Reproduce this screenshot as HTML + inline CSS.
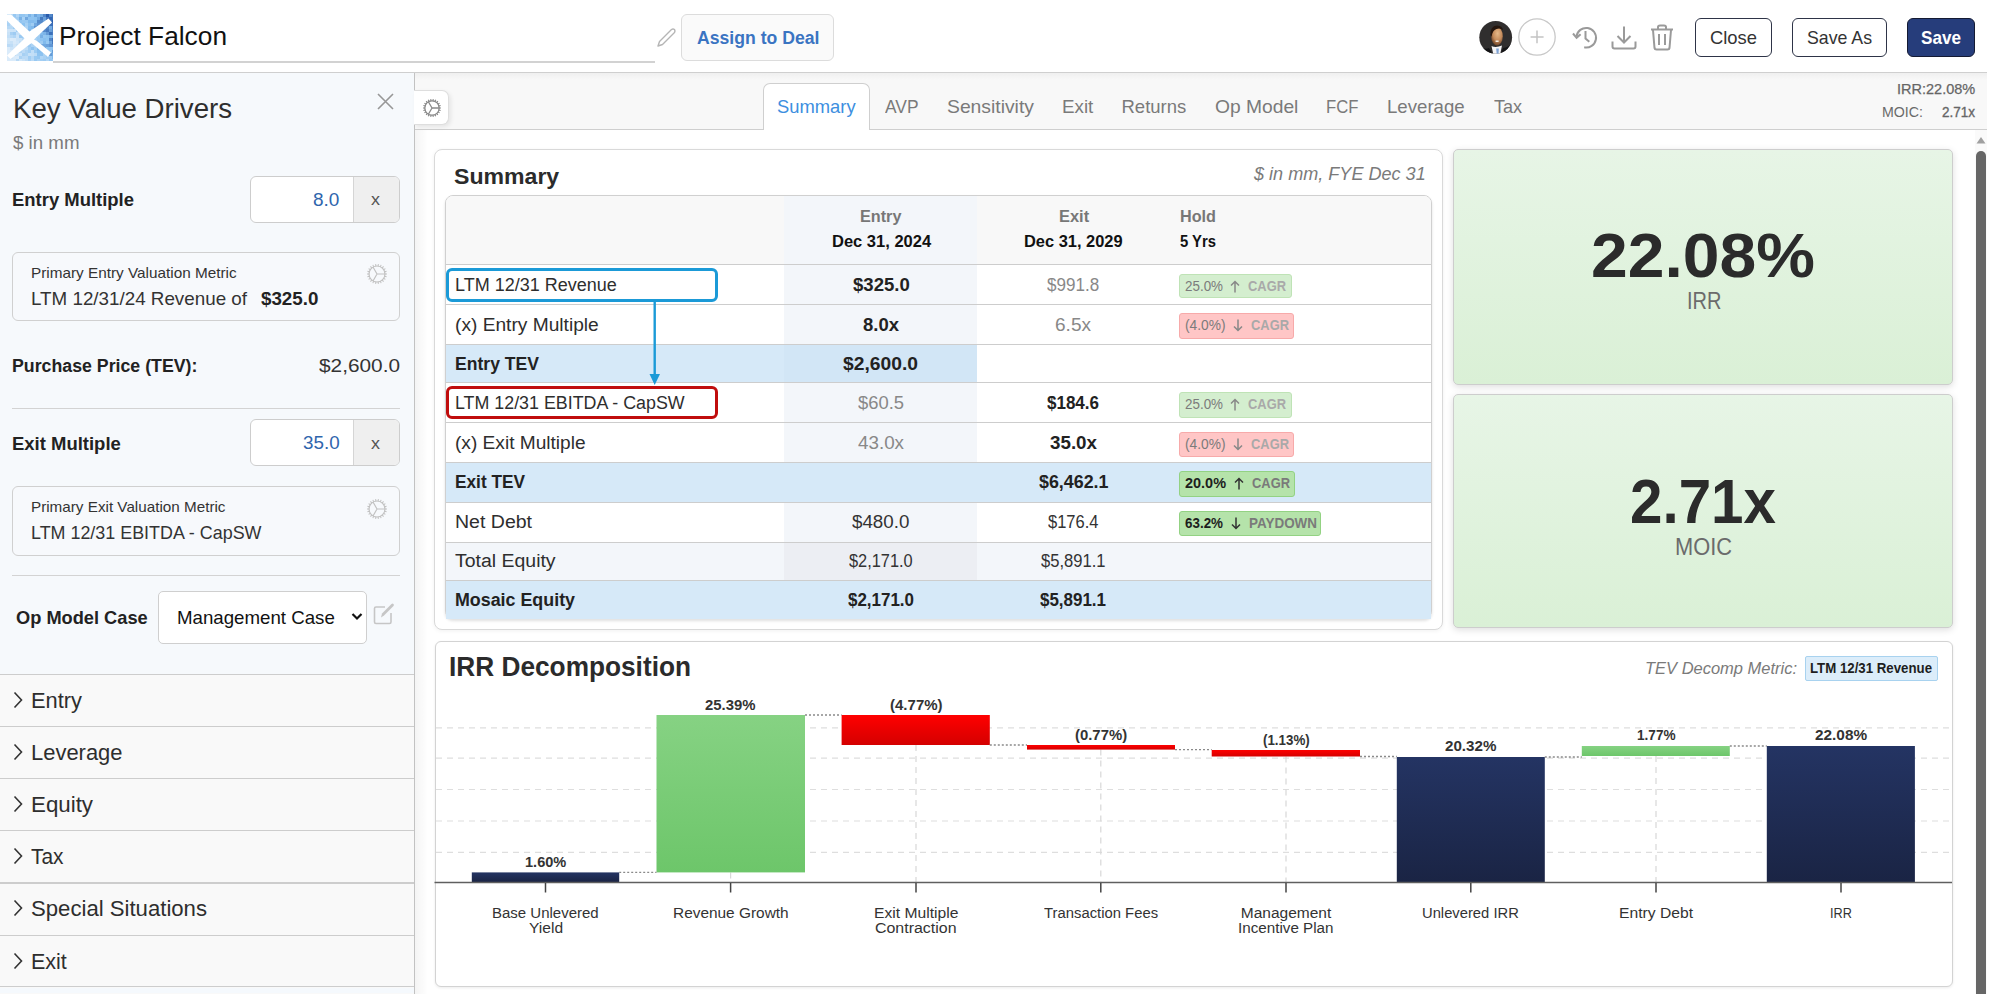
<!DOCTYPE html><html><head><meta charset="utf-8"><style>
html,body{margin:0;padding:0;}
body{width:1989px;height:994px;overflow:hidden;position:relative;background:#fff;font-family:"Liberation Sans",sans-serif;}
.t{position:absolute;white-space:nowrap;line-height:1.117;transform-origin:0 0;}
.r{position:absolute;box-sizing:border-box;}
svg{position:absolute;overflow:visible;}

</style></head><body>
<div class="r" style="left:0.0px;top:72.0px;width:1987.0px;height:1.0px;background:#cfcfcf;"></div>
<svg style="left:7px;top:14px;overflow:hidden" width="46" height="47" viewBox="0 0 46 47"><rect x="0" y="0" width="3.1" height="3.1" fill="rgb(181, 216, 245)"/><rect x="3" y="0" width="3.1" height="3.1" fill="rgb(185, 218, 246)"/><rect x="6" y="0" width="3.1" height="3.1" fill="rgb(151, 200, 242)"/><rect x="9" y="0" width="3.1" height="3.1" fill="rgb(177, 213, 245)"/><rect x="12" y="0" width="3.1" height="3.1" fill="rgb(145, 197, 241)"/><rect x="15" y="0" width="3.1" height="3.1" fill="rgb(148, 198, 241)"/><rect x="18" y="0" width="3.1" height="3.1" fill="rgb(158, 204, 242)"/><rect x="21" y="0" width="3.1" height="3.1" fill="rgb(124, 180, 232)"/><rect x="24" y="0" width="3.1" height="3.1" fill="rgb(145, 197, 241)"/><rect x="27" y="0" width="3.1" height="3.1" fill="rgb(110, 166, 222)"/><rect x="30" y="0" width="3.1" height="3.1" fill="rgb(128, 184, 235)"/><rect x="33" y="0" width="3.1" height="3.1" fill="rgb(116, 172, 226)"/><rect x="36" y="0" width="3.1" height="3.1" fill="rgb(81, 134, 201)"/><rect x="39" y="0" width="3.1" height="3.1" fill="rgb(42, 92, 172)"/><rect x="42" y="0" width="3.1" height="3.1" fill="rgb(83, 137, 202)"/><rect x="45" y="0" width="3.1" height="3.1" fill="rgb(66, 117, 189)"/><rect x="0" y="3" width="3.1" height="3.1" fill="rgb(168, 209, 244)"/><rect x="3" y="3" width="3.1" height="3.1" fill="rgb(145, 197, 241)"/><rect x="6" y="3" width="3.1" height="3.1" fill="rgb(159, 204, 243)"/><rect x="9" y="3" width="3.1" height="3.1" fill="rgb(163, 206, 243)"/><rect x="12" y="3" width="3.1" height="3.1" fill="rgb(122, 178, 230)"/><rect x="15" y="3" width="3.1" height="3.1" fill="rgb(169, 210, 244)"/><rect x="18" y="3" width="3.1" height="3.1" fill="rgb(113, 168, 224)"/><rect x="21" y="3" width="3.1" height="3.1" fill="rgb(143, 196, 241)"/><rect x="24" y="3" width="3.1" height="3.1" fill="rgb(144, 196, 241)"/><rect x="27" y="3" width="3.1" height="3.1" fill="rgb(139, 194, 240)"/><rect x="30" y="3" width="3.1" height="3.1" fill="rgb(116, 172, 226)"/><rect x="33" y="3" width="3.1" height="3.1" fill="rgb(69, 121, 191)"/><rect x="36" y="3" width="3.1" height="3.1" fill="rgb(106, 161, 219)"/><rect x="39" y="3" width="3.1" height="3.1" fill="rgb(66, 118, 190)"/><rect x="42" y="3" width="3.1" height="3.1" fill="rgb(52, 103, 179)"/><rect x="45" y="3" width="3.1" height="3.1" fill="rgb(61, 113, 186)"/><rect x="0" y="6" width="3.1" height="3.1" fill="rgb(177, 213, 245)"/><rect x="3" y="6" width="3.1" height="3.1" fill="rgb(197, 224, 247)"/><rect x="6" y="6" width="3.1" height="3.1" fill="rgb(191, 221, 246)"/><rect x="9" y="6" width="3.1" height="3.1" fill="rgb(177, 214, 245)"/><rect x="12" y="6" width="3.1" height="3.1" fill="rgb(146, 197, 241)"/><rect x="15" y="6" width="3.1" height="3.1" fill="rgb(153, 201, 242)"/><rect x="18" y="6" width="3.1" height="3.1" fill="rgb(153, 201, 242)"/><rect x="21" y="6" width="3.1" height="3.1" fill="rgb(130, 187, 236)"/><rect x="24" y="6" width="3.1" height="3.1" fill="rgb(131, 187, 237)"/><rect x="27" y="6" width="3.1" height="3.1" fill="rgb(133, 190, 238)"/><rect x="30" y="6" width="3.1" height="3.1" fill="rgb(86, 140, 204)"/><rect x="33" y="6" width="3.1" height="3.1" fill="rgb(84, 137, 202)"/><rect x="36" y="6" width="3.1" height="3.1" fill="rgb(108, 163, 220)"/><rect x="39" y="6" width="3.1" height="3.1" fill="rgb(73, 126, 195)"/><rect x="42" y="6" width="3.1" height="3.1" fill="rgb(67, 119, 190)"/><rect x="45" y="6" width="3.1" height="3.1" fill="rgb(42, 92, 172)"/><rect x="0" y="9" width="3.1" height="3.1" fill="rgb(170, 210, 244)"/><rect x="3" y="9" width="3.1" height="3.1" fill="rgb(189, 220, 246)"/><rect x="6" y="9" width="3.1" height="3.1" fill="rgb(145, 197, 241)"/><rect x="9" y="9" width="3.1" height="3.1" fill="rgb(186, 218, 246)"/><rect x="12" y="9" width="3.1" height="3.1" fill="rgb(164, 207, 243)"/><rect x="15" y="9" width="3.1" height="3.1" fill="rgb(139, 194, 240)"/><rect x="18" y="9" width="3.1" height="3.1" fill="rgb(166, 208, 243)"/><rect x="21" y="9" width="3.1" height="3.1" fill="rgb(141, 195, 240)"/><rect x="24" y="9" width="3.1" height="3.1" fill="rgb(159, 204, 242)"/><rect x="27" y="9" width="3.1" height="3.1" fill="rgb(112, 167, 223)"/><rect x="30" y="9" width="3.1" height="3.1" fill="rgb(95, 149, 211)"/><rect x="33" y="9" width="3.1" height="3.1" fill="rgb(100, 154, 214)"/><rect x="36" y="9" width="3.1" height="3.1" fill="rgb(67, 119, 190)"/><rect x="39" y="9" width="3.1" height="3.1" fill="rgb(99, 154, 214)"/><rect x="42" y="9" width="3.1" height="3.1" fill="rgb(61, 112, 186)"/><rect x="45" y="9" width="3.1" height="3.1" fill="rgb(58, 109, 184)"/><rect x="0" y="12" width="3.1" height="3.1" fill="rgb(182, 216, 245)"/><rect x="3" y="12" width="3.1" height="3.1" fill="rgb(183, 217, 245)"/><rect x="6" y="12" width="3.1" height="3.1" fill="rgb(157, 203, 242)"/><rect x="9" y="12" width="3.1" height="3.1" fill="rgb(145, 197, 241)"/><rect x="12" y="12" width="3.1" height="3.1" fill="rgb(165, 207, 243)"/><rect x="15" y="12" width="3.1" height="3.1" fill="rgb(148, 199, 241)"/><rect x="18" y="12" width="3.1" height="3.1" fill="rgb(175, 212, 244)"/><rect x="21" y="12" width="3.1" height="3.1" fill="rgb(133, 190, 239)"/><rect x="24" y="12" width="3.1" height="3.1" fill="rgb(128, 185, 235)"/><rect x="27" y="12" width="3.1" height="3.1" fill="rgb(93, 147, 209)"/><rect x="30" y="12" width="3.1" height="3.1" fill="rgb(97, 151, 212)"/><rect x="33" y="12" width="3.1" height="3.1" fill="rgb(127, 184, 234)"/><rect x="36" y="12" width="3.1" height="3.1" fill="rgb(110, 165, 222)"/><rect x="39" y="12" width="3.1" height="3.1" fill="rgb(79, 132, 199)"/><rect x="42" y="12" width="3.1" height="3.1" fill="rgb(117, 173, 227)"/><rect x="45" y="12" width="3.1" height="3.1" fill="rgb(75, 127, 196)"/><rect x="0" y="15" width="3.1" height="3.1" fill="rgb(208, 229, 248)"/><rect x="3" y="15" width="3.1" height="3.1" fill="rgb(205, 228, 248)"/><rect x="6" y="15" width="3.1" height="3.1" fill="rgb(203, 227, 248)"/><rect x="9" y="15" width="3.1" height="3.1" fill="rgb(159, 204, 242)"/><rect x="12" y="15" width="3.1" height="3.1" fill="rgb(187, 219, 246)"/><rect x="15" y="15" width="3.1" height="3.1" fill="rgb(175, 212, 244)"/><rect x="18" y="15" width="3.1" height="3.1" fill="rgb(161, 205, 243)"/><rect x="21" y="15" width="3.1" height="3.1" fill="rgb(126, 183, 234)"/><rect x="24" y="15" width="3.1" height="3.1" fill="rgb(165, 207, 243)"/><rect x="27" y="15" width="3.1" height="3.1" fill="rgb(138, 194, 240)"/><rect x="30" y="15" width="3.1" height="3.1" fill="rgb(123, 179, 231)"/><rect x="33" y="15" width="3.1" height="3.1" fill="rgb(89, 143, 206)"/><rect x="36" y="15" width="3.1" height="3.1" fill="rgb(84, 137, 203)"/><rect x="39" y="15" width="3.1" height="3.1" fill="rgb(71, 123, 193)"/><rect x="42" y="15" width="3.1" height="3.1" fill="rgb(105, 160, 218)"/><rect x="45" y="15" width="3.1" height="3.1" fill="rgb(85, 138, 203)"/><rect x="0" y="18" width="3.1" height="3.1" fill="rgb(201, 226, 247)"/><rect x="3" y="18" width="3.1" height="3.1" fill="rgb(167, 208, 243)"/><rect x="6" y="18" width="3.1" height="3.1" fill="rgb(158, 203, 242)"/><rect x="9" y="18" width="3.1" height="3.1" fill="rgb(196, 223, 247)"/><rect x="12" y="18" width="3.1" height="3.1" fill="rgb(189, 220, 246)"/><rect x="15" y="18" width="3.1" height="3.1" fill="rgb(180, 215, 245)"/><rect x="18" y="18" width="3.1" height="3.1" fill="rgb(174, 212, 244)"/><rect x="21" y="18" width="3.1" height="3.1" fill="rgb(154, 201, 242)"/><rect x="24" y="18" width="3.1" height="3.1" fill="rgb(142, 195, 240)"/><rect x="27" y="18" width="3.1" height="3.1" fill="rgb(153, 201, 242)"/><rect x="30" y="18" width="3.1" height="3.1" fill="rgb(160, 205, 243)"/><rect x="33" y="18" width="3.1" height="3.1" fill="rgb(130, 186, 236)"/><rect x="36" y="18" width="3.1" height="3.1" fill="rgb(124, 180, 232)"/><rect x="39" y="18" width="3.1" height="3.1" fill="rgb(100, 154, 214)"/><rect x="42" y="18" width="3.1" height="3.1" fill="rgb(61, 113, 186)"/><rect x="45" y="18" width="3.1" height="3.1" fill="rgb(71, 123, 193)"/><rect x="0" y="21" width="3.1" height="3.1" fill="rgb(195, 223, 247)"/><rect x="3" y="21" width="3.1" height="3.1" fill="rgb(185, 218, 246)"/><rect x="6" y="21" width="3.1" height="3.1" fill="rgb(176, 213, 245)"/><rect x="9" y="21" width="3.1" height="3.1" fill="rgb(205, 228, 248)"/><rect x="12" y="21" width="3.1" height="3.1" fill="rgb(153, 201, 242)"/><rect x="15" y="21" width="3.1" height="3.1" fill="rgb(154, 202, 242)"/><rect x="18" y="21" width="3.1" height="3.1" fill="rgb(143, 196, 240)"/><rect x="21" y="21" width="3.1" height="3.1" fill="rgb(141, 195, 240)"/><rect x="24" y="21" width="3.1" height="3.1" fill="rgb(157, 203, 242)"/><rect x="27" y="21" width="3.1" height="3.1" fill="rgb(150, 199, 241)"/><rect x="30" y="21" width="3.1" height="3.1" fill="rgb(159, 204, 242)"/><rect x="33" y="21" width="3.1" height="3.1" fill="rgb(120, 176, 229)"/><rect x="36" y="21" width="3.1" height="3.1" fill="rgb(148, 198, 241)"/><rect x="39" y="21" width="3.1" height="3.1" fill="rgb(141, 195, 240)"/><rect x="42" y="21" width="3.1" height="3.1" fill="rgb(123, 179, 231)"/><rect x="45" y="21" width="3.1" height="3.1" fill="rgb(117, 172, 226)"/><rect x="0" y="24" width="3.1" height="3.1" fill="rgb(208, 230, 248)"/><rect x="3" y="24" width="3.1" height="3.1" fill="rgb(218, 235, 250)"/><rect x="6" y="24" width="3.1" height="3.1" fill="rgb(217, 234, 249)"/><rect x="9" y="24" width="3.1" height="3.1" fill="rgb(203, 227, 248)"/><rect x="12" y="24" width="3.1" height="3.1" fill="rgb(200, 226, 247)"/><rect x="15" y="24" width="3.1" height="3.1" fill="rgb(180, 215, 245)"/><rect x="18" y="24" width="3.1" height="3.1" fill="rgb(193, 222, 247)"/><rect x="21" y="24" width="3.1" height="3.1" fill="rgb(141, 195, 240)"/><rect x="24" y="24" width="3.1" height="3.1" fill="rgb(149, 199, 241)"/><rect x="27" y="24" width="3.1" height="3.1" fill="rgb(168, 209, 243)"/><rect x="30" y="24" width="3.1" height="3.1" fill="rgb(155, 202, 242)"/><rect x="33" y="24" width="3.1" height="3.1" fill="rgb(144, 196, 241)"/><rect x="36" y="24" width="3.1" height="3.1" fill="rgb(136, 192, 240)"/><rect x="39" y="24" width="3.1" height="3.1" fill="rgb(142, 196, 240)"/><rect x="42" y="24" width="3.1" height="3.1" fill="rgb(82, 135, 201)"/><rect x="45" y="24" width="3.1" height="3.1" fill="rgb(61, 113, 186)"/><rect x="0" y="27" width="3.1" height="3.1" fill="rgb(204, 228, 248)"/><rect x="3" y="27" width="3.1" height="3.1" fill="rgb(199, 225, 247)"/><rect x="6" y="27" width="3.1" height="3.1" fill="rgb(215, 233, 249)"/><rect x="9" y="27" width="3.1" height="3.1" fill="rgb(209, 230, 249)"/><rect x="12" y="27" width="3.1" height="3.1" fill="rgb(191, 221, 246)"/><rect x="15" y="27" width="3.1" height="3.1" fill="rgb(189, 220, 246)"/><rect x="18" y="27" width="3.1" height="3.1" fill="rgb(153, 201, 242)"/><rect x="21" y="27" width="3.1" height="3.1" fill="rgb(183, 217, 245)"/><rect x="24" y="27" width="3.1" height="3.1" fill="rgb(185, 218, 246)"/><rect x="27" y="27" width="3.1" height="3.1" fill="rgb(126, 182, 233)"/><rect x="30" y="27" width="3.1" height="3.1" fill="rgb(145, 197, 241)"/><rect x="33" y="27" width="3.1" height="3.1" fill="rgb(159, 204, 242)"/><rect x="36" y="27" width="3.1" height="3.1" fill="rgb(129, 186, 236)"/><rect x="39" y="27" width="3.1" height="3.1" fill="rgb(152, 201, 242)"/><rect x="42" y="27" width="3.1" height="3.1" fill="rgb(112, 167, 223)"/><rect x="45" y="27" width="3.1" height="3.1" fill="rgb(69, 121, 191)"/><rect x="0" y="30" width="3.1" height="3.1" fill="rgb(186, 218, 246)"/><rect x="3" y="30" width="3.1" height="3.1" fill="rgb(190, 220, 246)"/><rect x="6" y="30" width="3.1" height="3.1" fill="rgb(209, 230, 248)"/><rect x="9" y="30" width="3.1" height="3.1" fill="rgb(198, 225, 247)"/><rect x="12" y="30" width="3.1" height="3.1" fill="rgb(204, 227, 248)"/><rect x="15" y="30" width="3.1" height="3.1" fill="rgb(166, 208, 243)"/><rect x="18" y="30" width="3.1" height="3.1" fill="rgb(173, 211, 244)"/><rect x="21" y="30" width="3.1" height="3.1" fill="rgb(154, 201, 242)"/><rect x="24" y="30" width="3.1" height="3.1" fill="rgb(172, 211, 244)"/><rect x="27" y="30" width="3.1" height="3.1" fill="rgb(172, 211, 244)"/><rect x="30" y="30" width="3.1" height="3.1" fill="rgb(133, 190, 238)"/><rect x="33" y="30" width="3.1" height="3.1" fill="rgb(111, 167, 223)"/><rect x="36" y="30" width="3.1" height="3.1" fill="rgb(112, 168, 223)"/><rect x="39" y="30" width="3.1" height="3.1" fill="rgb(107, 161, 219)"/><rect x="42" y="30" width="3.1" height="3.1" fill="rgb(96, 150, 212)"/><rect x="45" y="30" width="3.1" height="3.1" fill="rgb(93, 146, 209)"/><rect x="0" y="33" width="3.1" height="3.1" fill="rgb(218, 235, 250)"/><rect x="3" y="33" width="3.1" height="3.1" fill="rgb(203, 227, 248)"/><rect x="6" y="33" width="3.1" height="3.1" fill="rgb(207, 229, 248)"/><rect x="9" y="33" width="3.1" height="3.1" fill="rgb(218, 235, 250)"/><rect x="12" y="33" width="3.1" height="3.1" fill="rgb(215, 233, 249)"/><rect x="15" y="33" width="3.1" height="3.1" fill="rgb(196, 223, 247)"/><rect x="18" y="33" width="3.1" height="3.1" fill="rgb(191, 221, 246)"/><rect x="21" y="33" width="3.1" height="3.1" fill="rgb(162, 206, 243)"/><rect x="24" y="33" width="3.1" height="3.1" fill="rgb(142, 195, 240)"/><rect x="27" y="33" width="3.1" height="3.1" fill="rgb(164, 207, 243)"/><rect x="30" y="33" width="3.1" height="3.1" fill="rgb(129, 186, 236)"/><rect x="33" y="33" width="3.1" height="3.1" fill="rgb(117, 173, 227)"/><rect x="36" y="33" width="3.1" height="3.1" fill="rgb(111, 166, 222)"/><rect x="39" y="33" width="3.1" height="3.1" fill="rgb(142, 196, 240)"/><rect x="42" y="33" width="3.1" height="3.1" fill="rgb(144, 196, 241)"/><rect x="45" y="33" width="3.1" height="3.1" fill="rgb(136, 192, 240)"/><rect x="0" y="36" width="3.1" height="3.1" fill="rgb(218, 235, 250)"/><rect x="3" y="36" width="3.1" height="3.1" fill="rgb(218, 235, 250)"/><rect x="6" y="36" width="3.1" height="3.1" fill="rgb(195, 223, 247)"/><rect x="9" y="36" width="3.1" height="3.1" fill="rgb(176, 213, 244)"/><rect x="12" y="36" width="3.1" height="3.1" fill="rgb(174, 212, 244)"/><rect x="15" y="36" width="3.1" height="3.1" fill="rgb(189, 219, 246)"/><rect x="18" y="36" width="3.1" height="3.1" fill="rgb(174, 212, 244)"/><rect x="21" y="36" width="3.1" height="3.1" fill="rgb(160, 205, 243)"/><rect x="24" y="36" width="3.1" height="3.1" fill="rgb(193, 222, 247)"/><rect x="27" y="36" width="3.1" height="3.1" fill="rgb(156, 203, 242)"/><rect x="30" y="36" width="3.1" height="3.1" fill="rgb(136, 192, 240)"/><rect x="33" y="36" width="3.1" height="3.1" fill="rgb(137, 193, 240)"/><rect x="36" y="36" width="3.1" height="3.1" fill="rgb(132, 188, 237)"/><rect x="39" y="36" width="3.1" height="3.1" fill="rgb(141, 195, 240)"/><rect x="42" y="36" width="3.1" height="3.1" fill="rgb(150, 200, 241)"/><rect x="45" y="36" width="3.1" height="3.1" fill="rgb(101, 156, 215)"/><rect x="0" y="39" width="3.1" height="3.1" fill="rgb(218, 235, 250)"/><rect x="3" y="39" width="3.1" height="3.1" fill="rgb(193, 222, 247)"/><rect x="6" y="39" width="3.1" height="3.1" fill="rgb(179, 215, 245)"/><rect x="9" y="39" width="3.1" height="3.1" fill="rgb(206, 229, 248)"/><rect x="12" y="39" width="3.1" height="3.1" fill="rgb(201, 226, 248)"/><rect x="15" y="39" width="3.1" height="3.1" fill="rgb(167, 208, 243)"/><rect x="18" y="39" width="3.1" height="3.1" fill="rgb(173, 212, 244)"/><rect x="21" y="39" width="3.1" height="3.1" fill="rgb(198, 224, 247)"/><rect x="24" y="39" width="3.1" height="3.1" fill="rgb(195, 223, 247)"/><rect x="27" y="39" width="3.1" height="3.1" fill="rgb(188, 219, 246)"/><rect x="30" y="39" width="3.1" height="3.1" fill="rgb(141, 195, 240)"/><rect x="33" y="39" width="3.1" height="3.1" fill="rgb(140, 194, 240)"/><rect x="36" y="39" width="3.1" height="3.1" fill="rgb(169, 210, 244)"/><rect x="39" y="39" width="3.1" height="3.1" fill="rgb(123, 179, 231)"/><rect x="42" y="39" width="3.1" height="3.1" fill="rgb(102, 157, 216)"/><rect x="45" y="39" width="3.1" height="3.1" fill="rgb(117, 173, 227)"/><rect x="0" y="42" width="3.1" height="3.1" fill="rgb(218, 235, 250)"/><rect x="3" y="42" width="3.1" height="3.1" fill="rgb(209, 230, 248)"/><rect x="6" y="42" width="3.1" height="3.1" fill="rgb(218, 235, 250)"/><rect x="9" y="42" width="3.1" height="3.1" fill="rgb(218, 235, 250)"/><rect x="12" y="42" width="3.1" height="3.1" fill="rgb(173, 212, 244)"/><rect x="15" y="42" width="3.1" height="3.1" fill="rgb(186, 218, 246)"/><rect x="18" y="42" width="3.1" height="3.1" fill="rgb(188, 219, 246)"/><rect x="21" y="42" width="3.1" height="3.1" fill="rgb(160, 205, 243)"/><rect x="24" y="42" width="3.1" height="3.1" fill="rgb(182, 216, 245)"/><rect x="27" y="42" width="3.1" height="3.1" fill="rgb(152, 201, 242)"/><rect x="30" y="42" width="3.1" height="3.1" fill="rgb(149, 199, 241)"/><rect x="33" y="42" width="3.1" height="3.1" fill="rgb(176, 213, 245)"/><rect x="36" y="42" width="3.1" height="3.1" fill="rgb(168, 209, 244)"/><rect x="39" y="42" width="3.1" height="3.1" fill="rgb(159, 204, 242)"/><rect x="42" y="42" width="3.1" height="3.1" fill="rgb(156, 202, 242)"/><rect x="45" y="42" width="3.1" height="3.1" fill="rgb(129, 185, 235)"/><rect x="0" y="45" width="3.1" height="3.1" fill="rgb(218, 235, 250)"/><rect x="3" y="45" width="3.1" height="3.1" fill="rgb(218, 235, 250)"/><rect x="6" y="45" width="3.1" height="3.1" fill="rgb(218, 235, 250)"/><rect x="9" y="45" width="3.1" height="3.1" fill="rgb(184, 217, 245)"/><rect x="12" y="45" width="3.1" height="3.1" fill="rgb(210, 231, 249)"/><rect x="15" y="45" width="3.1" height="3.1" fill="rgb(200, 225, 247)"/><rect x="18" y="45" width="3.1" height="3.1" fill="rgb(188, 219, 246)"/><rect x="21" y="45" width="3.1" height="3.1" fill="rgb(165, 207, 243)"/><rect x="24" y="45" width="3.1" height="3.1" fill="rgb(186, 218, 246)"/><rect x="27" y="45" width="3.1" height="3.1" fill="rgb(153, 201, 242)"/><rect x="30" y="45" width="3.1" height="3.1" fill="rgb(170, 210, 244)"/><rect x="33" y="45" width="3.1" height="3.1" fill="rgb(163, 206, 243)"/><rect x="36" y="45" width="3.1" height="3.1" fill="rgb(157, 203, 242)"/><rect x="39" y="45" width="3.1" height="3.1" fill="rgb(178, 214, 245)"/><rect x="42" y="45" width="3.1" height="3.1" fill="rgb(149, 199, 241)"/><rect x="45" y="45" width="3.1" height="3.1" fill="rgb(156, 203, 242)"/><path d="M0 0.5 L4 0.5 L22.5 17.5 L41.5 4.5 L45 8.5 L27 25.5 L30 27 L44 38.5 L41 43 L24.5 29 L3.5 45 L0 41.5 L17.5 24.5 L0 6.5 Z" fill="#fff"/></svg>
<div class="t" style="left:59.0px;top:21.9px;font-size:26px;font-weight:normal;font-style:normal;color:#111;transform:scaleX(1.0109);">Project Falcon</div>
<div class="r" style="left:53.0px;top:61.0px;width:602.0px;height:2.0px;background:#d2d2d2;"></div>
<svg style="left:655px;top:27px" width="22" height="22" viewBox="0 0 22 22"><path d="M3 19 L4.5 14.5 L16.5 2.5 Q18 1.5 19.5 2.5 Q20.5 4 19.5 5.5 L7.5 17.5 Z" fill="none" stroke="#b5b5b5" stroke-width="1.4" stroke-linejoin="round"/></svg>
<div class="r" style="left:681.0px;top:13.5px;width:153.0px;height:47.0px;border:1px solid #dcdcdc;border-radius:6px;background:#fafafa;"></div>
<div class="t" style="left:697.0px;top:28.3px;font-size:18px;font-weight:bold;font-style:normal;color:#3a74c2;transform:scaleX(0.9790);">Assign to Deal</div>
<svg style="left:1478.8px;top:20.8px" width="34" height="34" viewBox="0 0 34 34">
<defs><clipPath id="ac"><circle cx="16.7" cy="16.3" r="16.4"/></clipPath>
<radialGradient id="fc" cx="0.55" cy="0.35" r="0.65"><stop offset="0" stop-color="#e6b888"/><stop offset="0.6" stop-color="#c48a5a"/><stop offset="1" stop-color="#6e4428"/></radialGradient></defs>
<g clip-path="url(#ac)"><rect width="34" height="34" fill="#302e2e"/>
<path d="M0 34 L0 22 Q4 30 10 27 L14 34Z" fill="#121214"/><path d="M34 34 L34 20 Q30 27 24 27 L21 34Z" fill="#141416"/>
<path d="M12.5 25 Q17 27 23 24.5 L21 34 L14.5 34 Z" fill="#f4f4f6"/><path d="M17.2 27.5 L19.8 27.5 L19.5 34 L17.8 34Z" fill="#7fa3d6"/>
<ellipse cx="18" cy="15.2" rx="5.8" ry="9.2" fill="url(#fc)"/>
<path d="M11.5 14 Q11 5 18 4.5 Q23.5 4.8 24 9 Q21 6.5 17.5 8 Q13.5 9 12.5 16Z" fill="#24150d"/>
<rect x="16.6" y="19.5" width="3" height="1.5" fill="#f0ece6"/>
</g></svg>
<svg style="left:1518px;top:18px" width="38" height="38" viewBox="0 0 38 38">
<circle cx="19" cy="19" r="18.2" fill="none" stroke="#c8c8c8" stroke-width="1.3"/>
<path d="M12.6 19 H25.6 M19 12.5 V25.3" stroke="#c4c4c4" stroke-width="1.5"/></svg>
<svg style="left:1572px;top:25px" width="28" height="25" viewBox="0 0 28 25">
<path d="M4.5 11.5 A9.8 9.8 0 1 1 12.2 22.3" fill="none" stroke="#9a9a9a" stroke-width="2"/>
<path d="M1 8.5 L4.6 12.8 L8.6 9.2" fill="none" stroke="#9a9a9a" stroke-width="2"/>
<path d="M13.5 6 V13.5 L17.3 16.8" fill="none" stroke="#9a9a9a" stroke-width="2"/></svg>
<svg style="left:1611px;top:25px" width="26" height="26" viewBox="0 0 26 26">
<path d="M13 1.5 V17.5 M6.5 11 L13 17.5 L19.5 11" fill="none" stroke="#9a9a9a" stroke-width="2"/>
<path d="M1.5 16.5 V21.5 Q1.5 23.5 3.5 23.5 H22.5 Q24.5 23.5 24.5 21.5 V16.5" fill="none" stroke="#9a9a9a" stroke-width="2"/></svg>
<svg style="left:1650px;top:24px" width="24" height="27" viewBox="0 0 24 27">
<path d="M1 5.5 H23" stroke="#9a9a9a" stroke-width="2"/>
<path d="M8 5 V3 Q8 1.5 10 1.5 H14 Q16 1.5 16 3 V5" fill="none" stroke="#9a9a9a" stroke-width="2"/>
<path d="M3 6 L4.5 24 Q4.7 25.5 6.5 25.5 H17.5 Q19.3 25.5 19.5 24 L21 6" fill="none" stroke="#9a9a9a" stroke-width="2"/>
<path d="M9 10 V21 M15 10 V21" stroke="#9a9a9a" stroke-width="2"/></svg>
<div class="r" style="left:1695.3px;top:18.0px;width:76.7px;height:38.5px;border:1.5px solid #2e3447;border-radius:6px;background:#fff;"></div>
<div class="t" style="left:1710.1px;top:27.3px;font-size:19px;font-weight:normal;font-style:normal;color:#333;transform:scaleX(0.9675);">Close</div>
<div class="r" style="left:1791.5px;top:18.0px;width:95.5px;height:38.5px;border:1.5px solid #2e3447;border-radius:6px;background:#fff;"></div>
<div class="t" style="left:1806.7px;top:27.3px;font-size:19px;font-weight:normal;font-style:normal;color:#333;transform:scaleX(0.9324);">Save As</div>
<div class="r" style="left:1906.6px;top:18.0px;width:68.6px;height:38.5px;border:1.5px solid #141a33;border-radius:6px;background:#263d7b;"></div>
<div class="t" style="left:1920.9px;top:27.3px;font-size:19px;font-weight:bold;font-style:normal;color:#fff;transform:scaleX(0.9014);">Save</div>
<div class="r" style="left:0.0px;top:73.0px;width:414.0px;height:601.0px;background:#f6f9fc;"></div>
<div class="r" style="left:0.0px;top:674.0px;width:414.0px;height:320.0px;background:#f9f9f9;"></div>
<div class="r" style="left:414.0px;top:73.0px;width:1.2px;height:921.0px;background:#c2c2c2;"></div>
<div class="t" style="left:12.8px;top:94.1px;font-size:27px;font-weight:normal;font-style:normal;color:#2e2e2e;transform:scaleX(1.0230);">Key Value Drivers</div>
<svg style="left:377px;top:93px" width="17" height="17" viewBox="0 0 17 17"><path d="M1 1 L16 16 M16 1 L1 16" stroke="#979797" stroke-width="1.6"/></svg>
<div class="t" style="left:12.5px;top:133.0px;font-size:18.5px;font-weight:normal;font-style:normal;color:#7a7a7a;transform:scaleX(1.0108);">$ in mm</div>
<div class="t" style="left:12.0px;top:190.0px;font-size:18px;font-weight:bold;font-style:normal;color:#222;transform:scaleX(1.0252);">Entry Multiple</div>
<div class="r" style="left:249.5px;top:175.5px;width:150.0px;height:47.5px;border:1px solid #cdcdcd;border-radius:6px;background:#fff;overflow:hidden;"></div>
<div class="r" style="left:353.0px;top:176.5px;width:45.5px;height:45.5px;background:#efefef;border-left:1px solid #d5d5d5;border-radius:0 5px 5px 0;"></div>
<div class="t" style="left:312.6px;top:189.5px;font-size:18px;font-weight:normal;font-style:normal;color:#2f65ad;transform:scaleX(1.0550);">8.0</div>
<div class="t" style="left:371.3px;top:190.4px;font-size:17px;font-weight:normal;font-style:normal;color:#555;transform:scaleX(1.0588);">x</div>
<div class="r" style="left:12.0px;top:251.7px;width:387.5px;height:69.5px;border:1px solid #d0d0d0;border-radius:6px;background:#f7f9fc;"></div>
<div class="t" style="left:31.4px;top:265.1px;font-size:15px;font-weight:normal;font-style:normal;color:#333;transform:scaleX(1.0206);">Primary Entry Valuation Metric</div>
<div class="t" style="left:31.4px;top:288.8px;font-size:18.5px;font-weight:normal;font-style:normal;color:#333;transform:scaleX(1.0162);">LTM 12/31/24 Revenue of</div>
<div class="t" style="left:261.2px;top:288.8px;font-size:18.5px;font-weight:bold;font-style:normal;color:#222;transform:scaleX(1.0144);">$325.0</div>
<svg style="left:364.8px;top:262.2px" width="24" height="24" viewBox="-12 -12 24 24"><circle cx="0" cy="0" r="8.00" fill="none" stroke="#c2c2c2" stroke-width="1.2"/><path d="M7.80 0.00 L10.00 0.00 M7.48 2.20 L9.59 2.82 M6.56 4.22 L8.41 5.41 M5.11 5.89 L6.55 7.56 M3.24 7.10 L4.15 9.10 M1.11 7.72 L1.42 9.90 M-1.11 7.72 L-1.42 9.90 M-3.24 7.10 L-4.15 9.10 M-5.11 5.89 L-6.55 7.56 M-6.56 4.22 L-8.41 5.41 M-7.48 2.20 L-9.59 2.82 M-7.80 0.00 L-10.00 0.00 M-7.48 -2.20 L-9.59 -2.82 M-6.56 -4.22 L-8.41 -5.41 M-5.11 -5.89 L-6.55 -7.56 M-3.24 -7.10 L-4.15 -9.10 M-1.11 -7.72 L-1.42 -9.90 M1.11 -7.72 L1.42 -9.90 M3.24 -7.10 L4.15 -9.10 M5.11 -5.89 L6.55 -7.56 M6.56 -4.22 L8.41 -5.41 M7.48 -2.20 L9.59 -2.82 " stroke="#c2c2c2" stroke-width="1.08"/><path d="M0 0 L8.00 0.00 M0 0 L-4.00 6.93 M0 0 L-4.00 -6.93 " stroke="#c2c2c2" stroke-width="1.2"/></svg>
<div class="t" style="left:12.0px;top:355.7px;font-size:18px;font-weight:bold;font-style:normal;color:#222;transform:scaleX(0.9858);">Purchase Price (TEV):</div>
<div class="t" style="left:318.5px;top:354.8px;font-size:19px;font-weight:normal;font-style:normal;color:#333;transform:scaleX(1.0952);">$2,600.0</div>
<div class="r" style="left:12.0px;top:408.0px;width:388.0px;height:1.0px;background:#d3d3d3;"></div>
<div class="t" style="left:11.8px;top:433.8px;font-size:18px;font-weight:bold;font-style:normal;color:#222;transform:scaleX(1.0263);">Exit Multiple</div>
<div class="r" style="left:249.5px;top:419.0px;width:150.0px;height:47.2px;border:1px solid #cdcdcd;border-radius:6px;background:#fff;overflow:hidden;"></div>
<div class="r" style="left:353.0px;top:420.0px;width:45.5px;height:45.2px;background:#efefef;border-left:1px solid #d5d5d5;border-radius:0 5px 5px 0;"></div>
<div class="t" style="left:302.8px;top:432.8px;font-size:18px;font-weight:normal;font-style:normal;color:#2f65ad;transform:scaleX(1.0447);">35.0</div>
<div class="t" style="left:371.3px;top:433.7px;font-size:17px;font-weight:normal;font-style:normal;color:#555;transform:scaleX(1.0588);">x</div>
<div class="r" style="left:12.0px;top:486.0px;width:387.5px;height:69.5px;border:1px solid #d0d0d0;border-radius:6px;background:#f7f9fc;"></div>
<div class="t" style="left:31.4px;top:499.4px;font-size:15px;font-weight:normal;font-style:normal;color:#333;transform:scaleX(1.0159);">Primary Exit Valuation Metric</div>
<div class="t" style="left:31.4px;top:523.1px;font-size:18.5px;font-weight:normal;font-style:normal;color:#333;transform:scaleX(0.9677);">LTM 12/31 EBITDA - CapSW</div>
<svg style="left:364.8px;top:496.5px" width="24" height="24" viewBox="-12 -12 24 24"><circle cx="0" cy="0" r="8.00" fill="none" stroke="#c2c2c2" stroke-width="1.2"/><path d="M7.80 0.00 L10.00 0.00 M7.48 2.20 L9.59 2.82 M6.56 4.22 L8.41 5.41 M5.11 5.89 L6.55 7.56 M3.24 7.10 L4.15 9.10 M1.11 7.72 L1.42 9.90 M-1.11 7.72 L-1.42 9.90 M-3.24 7.10 L-4.15 9.10 M-5.11 5.89 L-6.55 7.56 M-6.56 4.22 L-8.41 5.41 M-7.48 2.20 L-9.59 2.82 M-7.80 0.00 L-10.00 0.00 M-7.48 -2.20 L-9.59 -2.82 M-6.56 -4.22 L-8.41 -5.41 M-5.11 -5.89 L-6.55 -7.56 M-3.24 -7.10 L-4.15 -9.10 M-1.11 -7.72 L-1.42 -9.90 M1.11 -7.72 L1.42 -9.90 M3.24 -7.10 L4.15 -9.10 M5.11 -5.89 L6.55 -7.56 M6.56 -4.22 L8.41 -5.41 M7.48 -2.20 L9.59 -2.82 " stroke="#c2c2c2" stroke-width="1.08"/><path d="M0 0 L8.00 0.00 M0 0 L-4.00 6.93 M0 0 L-4.00 -6.93 " stroke="#c2c2c2" stroke-width="1.2"/></svg>
<div class="r" style="left:12.0px;top:575.0px;width:388.0px;height:1.0px;background:#d3d3d3;"></div>
<div class="t" style="left:16.3px;top:608.1px;font-size:18.5px;font-weight:bold;font-style:normal;color:#222;transform:scaleX(0.9855);">Op Model Case</div>
<div class="r" style="left:158.3px;top:590.7px;width:208.5px;height:53.8px;border:1px solid #cfcfcf;border-radius:5px;background:#fff;"></div>
<div class="t" style="left:176.6px;top:608.1px;font-size:18.5px;font-weight:normal;font-style:normal;color:#111;transform:scaleX(1.0095);">Management Case</div>
<svg style="left:351px;top:612px" width="12" height="9" viewBox="0 0 12 9"><path d="M1.5 2 L6 6.5 L10.5 2" fill="none" stroke="#111" stroke-width="2.2"/></svg>
<svg style="left:373px;top:602px" width="22" height="23" viewBox="0 0 22 23">
<path d="M12 5 H3 Q1.5 5 1.5 6.5 V20 Q1.5 21.5 3 21.5 H16.5 Q18 21.5 18 20 V11" fill="none" stroke="#c6c6c6" stroke-width="1.6"/>
<path d="M8 15.5 L9 11.5 L18.5 2 Q19.5 1.2 20.5 2 Q21.3 3 20.5 4 L11 13.5 Z" fill="#c6c6c6"/></svg>
<div class="r" style="left:0.0px;top:674.0px;width:414.0px;height:1.2px;background:#cdcdcd;"></div>
<svg style="left:12px;top:691.0px" width="12" height="18" viewBox="0 0 12 18"><path d="M2.5 1.5 L9.5 9 L2.5 16.5" fill="none" stroke="#333" stroke-width="1.6"/></svg>
<div class="t" style="left:31.0px;top:688.9px;font-size:21.5px;font-weight:normal;font-style:normal;color:#2e2e2e;transform:scaleX(1.0163);">Entry</div>
<div class="r" style="left:0.0px;top:726.0px;width:414.0px;height:1.2px;background:#cdcdcd;"></div>
<svg style="left:12px;top:743.0px" width="12" height="18" viewBox="0 0 12 18"><path d="M2.5 1.5 L9.5 9 L2.5 16.5" fill="none" stroke="#333" stroke-width="1.6"/></svg>
<div class="t" style="left:31.0px;top:740.9px;font-size:21.5px;font-weight:normal;font-style:normal;color:#2e2e2e;transform:scaleX(1.0206);">Leverage</div>
<div class="r" style="left:0.0px;top:778.0px;width:414.0px;height:1.2px;background:#cdcdcd;"></div>
<svg style="left:12px;top:795.0px" width="12" height="18" viewBox="0 0 12 18"><path d="M2.5 1.5 L9.5 9 L2.5 16.5" fill="none" stroke="#333" stroke-width="1.6"/></svg>
<div class="t" style="left:31.0px;top:792.9px;font-size:21.5px;font-weight:normal;font-style:normal;color:#2e2e2e;transform:scaleX(1.0375);">Equity</div>
<div class="r" style="left:0.0px;top:830.3px;width:414.0px;height:1.2px;background:#cdcdcd;"></div>
<svg style="left:12px;top:847.3px" width="12" height="18" viewBox="0 0 12 18"><path d="M2.5 1.5 L9.5 9 L2.5 16.5" fill="none" stroke="#333" stroke-width="1.6"/></svg>
<div class="t" style="left:31.0px;top:845.2px;font-size:21.5px;font-weight:normal;font-style:normal;color:#2e2e2e;transform:scaleX(0.9714);">Tax</div>
<div class="r" style="left:0.0px;top:882.4px;width:414.0px;height:1.2px;background:#cdcdcd;"></div>
<svg style="left:12px;top:899.4px" width="12" height="18" viewBox="0 0 12 18"><path d="M2.5 1.5 L9.5 9 L2.5 16.5" fill="none" stroke="#333" stroke-width="1.6"/></svg>
<div class="t" style="left:31.0px;top:897.3px;font-size:21.5px;font-weight:normal;font-style:normal;color:#2e2e2e;transform:scaleX(1.0298);">Special Situations</div>
<div class="r" style="left:0.0px;top:934.6px;width:414.0px;height:1.2px;background:#cdcdcd;"></div>
<svg style="left:12px;top:951.6px" width="12" height="18" viewBox="0 0 12 18"><path d="M2.5 1.5 L9.5 9 L2.5 16.5" fill="none" stroke="#333" stroke-width="1.6"/></svg>
<div class="t" style="left:31.0px;top:949.5px;font-size:21.5px;font-weight:normal;font-style:normal;color:#2e2e2e;">Exit</div>
<div class="r" style="left:0.0px;top:986.3px;width:414.0px;height:1.2px;background:#cdcdcd;"></div>
<div class="r" style="left:0.0px;top:987.5px;width:414.0px;height:5.5px;background:#f5f9fd;"></div>
<div class="r" style="left:415.0px;top:73.0px;width:1572.0px;height:56.0px;background:#f8f8f8;"></div>
<div class="r" style="left:415.0px;top:129.0px;width:1572.0px;height:1.3px;background:#cfcfcf;"></div>
<div class="r" style="left:415.2px;top:73.0px;width:1571.8px;height:7.0px;background:linear-gradient(rgba(0,0,0,0.035),rgba(0,0,0,0));"></div>
<div class="r" style="left:414.0px;top:90.0px;width:35.0px;height:34.5px;background:#fff;border:1px solid #dedede;border-left:none;border-radius:0 7px 7px 0;box-shadow:2px 2px 4px rgba(0,0,0,0.08);"></div>
<svg style="left:421.2px;top:96.5px" width="22" height="22" viewBox="-11 -11 22 22"><circle cx="0" cy="0" r="7.20" fill="none" stroke="#8a8a8a" stroke-width="1.3"/><path d="M7.02 0.00 L9.00 0.00 M6.74 1.98 L8.64 2.54 M5.91 3.80 L7.57 4.87 M4.60 5.31 L5.89 6.80 M2.92 6.39 L3.74 8.19 M1.00 6.95 L1.28 8.91 M-1.00 6.95 L-1.28 8.91 M-2.92 6.39 L-3.74 8.19 M-4.60 5.31 L-5.89 6.80 M-5.91 3.80 L-7.57 4.87 M-6.74 1.98 L-8.64 2.54 M-7.02 0.00 L-9.00 0.00 M-6.74 -1.98 L-8.64 -2.54 M-5.91 -3.80 L-7.57 -4.87 M-4.60 -5.31 L-5.89 -6.80 M-2.92 -6.39 L-3.74 -8.19 M-1.00 -6.95 L-1.28 -8.91 M1.00 -6.95 L1.28 -8.91 M2.92 -6.39 L3.74 -8.19 M4.60 -5.31 L5.89 -6.80 M5.91 -3.80 L7.57 -4.87 M6.74 -1.98 L8.64 -2.54 " stroke="#8a8a8a" stroke-width="1.1700000000000002"/><path d="M0 0 L7.20 0.00 M0 0 L-3.60 6.24 M0 0 L-3.60 -6.24 " stroke="#8a8a8a" stroke-width="1.3"/></svg>
<div class="r" style="left:762.7px;top:82.8px;width:107.3px;height:47.5px;background:#fff;border:1px solid #cfcfcf;border-bottom:none;border-radius:7px 7px 0 0;"></div>
<div class="t" style="left:777.0px;top:96.7px;font-size:18.5px;font-weight:normal;font-style:normal;color:#3d8fdf;transform:scaleX(0.9930);">Summary</div>
<div class="t" style="left:885.3px;top:96.5px;font-size:18.5px;font-weight:normal;font-style:normal;color:#7a7a7a;transform:scaleX(0.9398);">AVP</div>
<div class="t" style="left:947.0px;top:96.5px;font-size:18.5px;font-weight:normal;font-style:normal;color:#7a7a7a;transform:scaleX(1.0435);">Sensitivity</div>
<div class="t" style="left:1061.7px;top:96.5px;font-size:18.5px;font-weight:normal;font-style:normal;color:#7a7a7a;transform:scaleX(1.0149);">Exit</div>
<div class="t" style="left:1121.5px;top:96.5px;font-size:18.5px;font-weight:normal;font-style:normal;color:#7a7a7a;">Returns</div>
<div class="t" style="left:1214.5px;top:96.5px;font-size:18.5px;font-weight:normal;font-style:normal;color:#7a7a7a;transform:scaleX(1.0398);">Op Model</div>
<div class="t" style="left:1326.4px;top:96.5px;font-size:18.5px;font-weight:normal;font-style:normal;color:#7a7a7a;transform:scaleX(0.9009);">FCF</div>
<div class="t" style="left:1387.0px;top:96.5px;font-size:18.5px;font-weight:normal;font-style:normal;color:#7a7a7a;transform:scaleX(1.0072);">Leverage</div>
<div class="t" style="left:1493.6px;top:96.5px;font-size:18.5px;font-weight:normal;font-style:normal;color:#7a7a7a;transform:scaleX(0.9761);">Tax</div>
<div class="t" style="left:1897.0px;top:81.2px;font-size:14.5px;font-weight:normal;font-style:normal;color:#666;-webkit-text-stroke:0.25px #666;">IRR:22.08%</div>
<div class="t" style="left:1881.7px;top:103.9px;font-size:14.5px;font-weight:normal;font-style:normal;color:#6a6a6a;transform:scaleX(0.9789);">MOIC:</div>
<div class="t" style="left:1942.0px;top:103.9px;font-size:14.5px;font-weight:normal;font-style:normal;color:#666;transform:scaleX(0.9303);-webkit-text-stroke:0.35px #666;">2.71x</div>
<div class="r" style="left:1975.0px;top:130.3px;width:12.0px;height:863.7px;background:#fafafa;"></div>
<svg style="left:1975px;top:135px" width="12" height="10" viewBox="0 0 12 10"><path d="M1.5 8.5 L6 2 L10.5 8.5Z" fill="#a0a0a0"/></svg>
<div class="r" style="left:1976.0px;top:151.0px;width:10.0px;height:843.0px;background:#666;border-radius:5px 5px 0 0;"></div>
<div class="r" style="left:415.2px;top:130.3px;width:12.8px;height:863.7px;background:linear-gradient(to right,rgba(0,0,0,0.045),rgba(0,0,0,0));"></div>
<div class="r" style="left:434.0px;top:148.5px;width:1009.0px;height:481.0px;border:1px solid #d9d9d9;border-radius:8px;background:#fff;box-shadow:0 1px 4px rgba(0,0,0,0.06);"></div>
<div class="t" style="left:454.2px;top:164.4px;font-size:22.5px;font-weight:bold;font-style:normal;color:#2b2b2b;transform:scaleX(1.0259);">Summary</div>
<div class="t" style="left:1254.3px;top:163.6px;font-size:18.5px;font-weight:normal;font-style:italic;color:#7a7a7a;transform:scaleX(0.9766);">$ in mm, FYE Dec 31</div>
<div class="r" style="left:444.6px;top:195.3px;width:987.9px;height:424.2px;border:1px solid #d0d0d0;border-radius:8px;background:#fff;box-shadow:0 2px 3px rgba(0,0,0,0.12);overflow:hidden;"></div>
<div class="r" style="left:445.6px;top:196.3px;width:985.9px;height:67.7px;background:#f8f8f8;border-radius:7px 7px 0 0;"></div>
<div class="r" style="left:784.4px;top:196.3px;width:192.4px;height:67.7px;background:#f3f6fa;"></div>
<div class="r" style="left:784.4px;top:264.0px;width:192.4px;height:40.0px;background:#f3f6fa;"></div>
<div class="r" style="left:784.4px;top:304.0px;width:192.4px;height:40.0px;background:#f3f6fa;"></div>
<div class="r" style="left:445.6px;top:344.0px;width:531.2px;height:38.6px;background:#d6e9f8;"></div>
<div class="r" style="left:784.4px;top:344.0px;width:192.4px;height:38.6px;background:#d2e6f6;"></div>
<div class="r" style="left:784.4px;top:382.6px;width:192.4px;height:39.8px;background:#f3f6fa;"></div>
<div class="r" style="left:784.4px;top:422.4px;width:192.4px;height:39.4px;background:#f3f6fa;"></div>
<div class="r" style="left:445.6px;top:461.8px;width:985.9px;height:40.2px;background:#d6e9f8;"></div>
<div class="r" style="left:784.4px;top:502.0px;width:192.4px;height:40.0px;background:#f3f6fa;"></div>
<div class="r" style="left:445.6px;top:542.0px;width:985.9px;height:38.0px;background:#f3f6fa;"></div>
<div class="r" style="left:784.4px;top:542.0px;width:192.4px;height:38.0px;background:#eceef3;"></div>
<div class="r" style="left:445.6px;top:580.0px;width:985.9px;height:38.5px;background:#d6e9f8;"></div>
<div class="r" style="left:445.6px;top:263.7px;width:985.9px;height:1.2px;background:#cdcdcd;"></div>
<div class="r" style="left:445.6px;top:303.7px;width:985.9px;height:1.2px;background:#cdcdcd;"></div>
<div class="r" style="left:445.6px;top:343.7px;width:985.9px;height:1.2px;background:#cdcdcd;"></div>
<div class="r" style="left:445.6px;top:382.3px;width:985.9px;height:1.2px;background:#cdcdcd;"></div>
<div class="r" style="left:445.6px;top:422.1px;width:985.9px;height:1.2px;background:#cdcdcd;"></div>
<div class="r" style="left:445.6px;top:461.5px;width:985.9px;height:1.2px;background:#cdcdcd;"></div>
<div class="r" style="left:445.6px;top:501.7px;width:985.9px;height:1.2px;background:#cdcdcd;"></div>
<div class="r" style="left:445.6px;top:541.7px;width:985.9px;height:1.2px;background:#cdcdcd;"></div>
<div class="r" style="left:445.6px;top:579.7px;width:985.9px;height:1.2px;background:#cdcdcd;"></div>
<div class="t" style="left:860.2px;top:207.1px;font-size:17px;font-weight:bold;font-style:normal;color:#777;transform:scaleX(0.9527);">Entry</div>
<div class="t" style="left:831.7px;top:231.6px;font-size:17px;font-weight:bold;font-style:normal;color:#111;transform:scaleX(0.9708);">Dec 31, 2024</div>
<div class="t" style="left:1058.5px;top:207.1px;font-size:17px;font-weight:bold;font-style:normal;color:#777;transform:scaleX(0.9654);">Exit</div>
<div class="t" style="left:1024.2px;top:231.6px;font-size:17px;font-weight:bold;font-style:normal;color:#111;transform:scaleX(0.9659);">Dec 31, 2029</div>
<div class="t" style="left:1179.7px;top:207.1px;font-size:17px;font-weight:bold;font-style:normal;color:#777;transform:scaleX(0.9532);">Hold</div>
<div class="t" style="left:1179.7px;top:231.6px;font-size:17px;font-weight:bold;font-style:normal;color:#111;transform:scaleX(0.8721);">5 Yrs</div>
<div class="t" style="left:455.0px;top:275.3px;font-size:18px;font-weight:normal;font-style:normal;color:#2e2e2e;">LTM 12/31 Revenue</div>
<div class="t" style="left:852.5px;top:275.3px;font-size:18px;font-weight:bold;font-style:normal;color:#222;transform:scaleX(1.0317);">$325.0</div>
<div class="t" style="left:1047.4px;top:275.3px;font-size:18px;font-weight:normal;font-style:normal;color:#888;transform:scaleX(0.9463);">$991.8</div>
<div class="t" style="left:455.0px;top:314.6px;font-size:18px;font-weight:normal;font-style:normal;color:#2e2e2e;transform:scaleX(1.0642);">(x) Entry Multiple</div>
<div class="t" style="left:862.9px;top:314.6px;font-size:18px;font-weight:bold;font-style:normal;color:#222;transform:scaleX(1.0276);">8.0x</div>
<div class="t" style="left:1055.4px;top:314.6px;font-size:18px;font-weight:normal;font-style:normal;color:#888;transform:scaleX(1.0581);">6.5x</div>
<div class="t" style="left:455.0px;top:353.7px;font-size:18px;font-weight:bold;font-style:normal;color:#222;transform:scaleX(0.9765);">Entry TEV</div>
<div class="t" style="left:843.4px;top:353.7px;font-size:18px;font-weight:bold;font-style:normal;color:#222;transform:scaleX(1.0704);">$2,600.0</div>
<div class="t" style="left:455.0px;top:392.7px;font-size:18px;font-weight:normal;font-style:normal;color:#2e2e2e;transform:scaleX(0.9912);">LTM 12/31 EBITDA - CapSW</div>
<div class="t" style="left:857.9px;top:392.7px;font-size:18px;font-weight:normal;font-style:normal;color:#888;transform:scaleX(1.0212);">$60.5</div>
<div class="t" style="left:1047.4px;top:392.7px;font-size:18px;font-weight:bold;font-style:normal;color:#222;transform:scaleX(0.9445);">$184.6</div>
<div class="t" style="left:455.0px;top:433.1px;font-size:18px;font-weight:normal;font-style:normal;color:#2e2e2e;transform:scaleX(1.0616);">(x) Exit Multiple</div>
<div class="t" style="left:857.9px;top:433.1px;font-size:18px;font-weight:normal;font-style:normal;color:#888;transform:scaleX(1.0446);">43.0x</div>
<div class="t" style="left:1049.9px;top:433.1px;font-size:18px;font-weight:bold;font-style:normal;color:#222;transform:scaleX(1.0434);">35.0x</div>
<div class="t" style="left:455.0px;top:472.4px;font-size:18px;font-weight:bold;font-style:normal;color:#222;transform:scaleX(0.9586);">Exit TEV</div>
<div class="t" style="left:1038.7px;top:472.4px;font-size:18px;font-weight:bold;font-style:normal;color:#222;transform:scaleX(0.9919);">$6,462.1</div>
<div class="t" style="left:455.0px;top:511.5px;font-size:18px;font-weight:normal;font-style:normal;color:#2e2e2e;transform:scaleX(1.0840);">Net Debt</div>
<div class="t" style="left:852.2px;top:511.5px;font-size:18px;font-weight:normal;font-style:normal;color:#333;transform:scaleX(1.0426);">$480.0</div>
<div class="t" style="left:1048.2px;top:511.5px;font-size:18px;font-weight:normal;font-style:normal;color:#333;transform:scaleX(0.9172);">$176.4</div>
<div class="t" style="left:455.0px;top:550.9px;font-size:18px;font-weight:normal;font-style:normal;color:#2e2e2e;transform:scaleX(1.0811);">Total Equity</div>
<div class="t" style="left:849.0px;top:550.9px;font-size:18px;font-weight:normal;font-style:normal;color:#333;transform:scaleX(0.9091);">$2,171.0</div>
<div class="t" style="left:1041.2px;top:550.9px;font-size:18px;font-weight:normal;font-style:normal;color:#333;transform:scaleX(0.9205);">$5,891.1</div>
<div class="t" style="left:455.0px;top:589.5px;font-size:18px;font-weight:bold;font-style:normal;color:#222;transform:scaleX(0.9915);">Mosaic Equity</div>
<div class="t" style="left:847.9px;top:589.5px;font-size:18px;font-weight:bold;font-style:normal;color:#222;transform:scaleX(0.9419);">$2,171.0</div>
<div class="t" style="left:1040.4px;top:589.5px;font-size:18px;font-weight:bold;font-style:normal;color:#222;transform:scaleX(0.9419);">$5,891.1</div>
<div class="r" style="left:1179.0px;top:273.8px;width:113.3px;height:24.7px;border:1px solid #bfe3b6;border-radius:3px;background:#d4eecf;"></div>
<div class="t" style="left:1185.0px;top:278.5px;font-size:14px;font-weight:normal;font-style:normal;color:#7b7b7b;transform:scaleX(0.9573);">25.0%</div>
<svg style="left:1230.0px;top:279.8px" width="10" height="13" viewBox="0 0 10 13"><path d="M5 12.5 V1.5 M1 5.5 L5 1.5 L9 5.5" fill="none" stroke="#888" stroke-width="1.5"/></svg>
<div class="t" style="left:1248.0px;top:278.5px;font-size:14px;font-weight:bold;font-style:normal;color:#a9a9a9;transform:scaleX(0.9219);">CAGR</div>
<div class="r" style="left:1179.0px;top:313.2px;width:114.7px;height:25.8px;border:1px solid #f7aaaa;border-radius:3px;background:#ffc6c6;"></div>
<div class="t" style="left:1185.0px;top:318.4px;font-size:14px;font-weight:normal;font-style:normal;color:#7b7b7b;transform:scaleX(0.9822);">(4.0%)</div>
<svg style="left:1232.5px;top:319.2px" width="10" height="13" viewBox="0 0 10 13"><path d="M5 0.5 V11.5 M1 7.5 L5 11.5 L9 7.5" fill="none" stroke="#888" stroke-width="1.5"/></svg>
<div class="t" style="left:1250.5px;top:318.4px;font-size:14px;font-weight:bold;font-style:normal;color:#a9a9a9;transform:scaleX(0.9219);">CAGR</div>
<div class="r" style="left:1179.0px;top:392.0px;width:113.3px;height:25.5px;border:1px solid #bfe3b6;border-radius:3px;background:#d4eecf;"></div>
<div class="t" style="left:1185.0px;top:397.1px;font-size:14px;font-weight:normal;font-style:normal;color:#7b7b7b;transform:scaleX(0.9573);">25.0%</div>
<svg style="left:1230.0px;top:398.0px" width="10" height="13" viewBox="0 0 10 13"><path d="M5 12.5 V1.5 M1 5.5 L5 1.5 L9 5.5" fill="none" stroke="#888" stroke-width="1.5"/></svg>
<div class="t" style="left:1248.0px;top:397.1px;font-size:14px;font-weight:bold;font-style:normal;color:#a9a9a9;transform:scaleX(0.9219);">CAGR</div>
<div class="r" style="left:1179.0px;top:431.5px;width:114.7px;height:25.3px;border:1px solid #f7aaaa;border-radius:3px;background:#ffc6c6;"></div>
<div class="t" style="left:1185.0px;top:436.5px;font-size:14px;font-weight:normal;font-style:normal;color:#7b7b7b;transform:scaleX(0.9822);">(4.0%)</div>
<svg style="left:1232.5px;top:437.5px" width="10" height="13" viewBox="0 0 10 13"><path d="M5 0.5 V11.5 M1 7.5 L5 11.5 L9 7.5" fill="none" stroke="#888" stroke-width="1.5"/></svg>
<div class="t" style="left:1250.5px;top:436.5px;font-size:14px;font-weight:bold;font-style:normal;color:#a9a9a9;transform:scaleX(0.9219);">CAGR</div>
<div class="r" style="left:1179.0px;top:471.0px;width:115.5px;height:25.5px;border:1px solid #93d283;border-radius:3px;background:#b5e3aa;"></div>
<div class="t" style="left:1185.0px;top:476.1px;font-size:14px;font-weight:bold;font-style:normal;color:#1e1e1e;transform:scaleX(1.0328);">20.0%</div>
<svg style="left:1234.0px;top:477.0px" width="10" height="13" viewBox="0 0 10 13"><path d="M5 12.5 V1.5 M1 5.5 L5 1.5 L9 5.5" fill="none" stroke="#333" stroke-width="1.5"/></svg>
<div class="t" style="left:1252.0px;top:476.1px;font-size:14px;font-weight:bold;font-style:normal;color:#7a7a7a;transform:scaleX(0.9219);">CAGR</div>
<div class="r" style="left:1179.0px;top:511.3px;width:142.0px;height:24.7px;border:1px solid #93d283;border-radius:3px;background:#b5e3aa;"></div>
<div class="t" style="left:1185.0px;top:516.0px;font-size:14px;font-weight:bold;font-style:normal;color:#1e1e1e;transform:scaleX(0.9573);">63.2%</div>
<svg style="left:1231.0px;top:517.3px" width="10" height="13" viewBox="0 0 10 13"><path d="M5 0.5 V11.5 M1 7.5 L5 11.5 L9 7.5" fill="none" stroke="#333" stroke-width="1.5"/></svg>
<div class="t" style="left:1249.0px;top:516.0px;font-size:14px;font-weight:bold;font-style:normal;color:#7a7a7a;transform:scaleX(0.9606);">PAYDOWN</div>
<div class="r" style="left:445.7px;top:268.0px;width:272.3px;height:34.0px;border:3px solid #1b9ad7;border-radius:6px;"></div>
<div class="r" style="left:445.7px;top:385.8px;width:272.3px;height:33.7px;border:3px solid #c00d0d;border-radius:6px;"></div>
<svg style="left:645px;top:300px" width="20" height="88" viewBox="0 0 20 88"><path d="M9.7 2 V76" stroke="#1b9ad7" stroke-width="2.4"/><path d="M4.5 74 L9.7 85 L15 74Z" fill="#1b9ad7"/></svg>
<div class="r" style="left:1453.0px;top:149.0px;width:499.5px;height:235.5px;border:1px solid #cdcdcd;border-radius:5px;background:linear-gradient(#e7f5e6,#daf0d6);box-shadow:0 2px 7px rgba(0,0,0,0.13);"></div>
<div class="t" style="left:1591.0px;top:220.0px;font-size:63px;font-weight:bold;font-style:normal;color:#2b2b2b;transform:scaleX(1.0483);">22.08%</div>
<div class="t" style="left:1686.6px;top:289.2px;font-size:23px;font-weight:normal;font-style:normal;color:#6b6b6b;transform:scaleX(0.8685);">IRR</div>
<div class="r" style="left:1453.0px;top:394.4px;width:499.5px;height:234.1px;border:1px solid #cdcdcd;border-radius:5px;background:linear-gradient(#e7f5e6,#daf0d6);box-shadow:0 2px 7px rgba(0,0,0,0.13);"></div>
<div class="t" style="left:1630.0px;top:465.5px;font-size:63px;font-weight:bold;font-style:normal;color:#2b2b2b;transform:scaleX(0.9261);">2.71x</div>
<div class="t" style="left:1675.3px;top:534.9px;font-size:23px;font-weight:normal;font-style:normal;color:#6b6b6b;transform:scaleX(0.9492);">MOIC</div>
<div class="r" style="left:434.5px;top:640.6px;width:1518.5px;height:346.4px;border:1px solid #d3d3d3;border-radius:6px;background:#fff;box-shadow:0 1px 3px rgba(0,0,0,0.08);"></div>
<div class="t" style="left:449.4px;top:651.9px;font-size:27px;font-weight:bold;font-style:normal;color:#2b2b2b;transform:scaleX(0.9718);">IRR Decomposition</div>
<div class="t" style="left:1645.0px;top:658.6px;font-size:17px;font-weight:normal;font-style:italic;color:#7a7a7a;transform:scaleX(0.9693);">TEV Decomp Metric:</div>
<div class="r" style="left:1805.0px;top:656.4px;width:133.0px;height:24.6px;border:1px solid #a8d2ef;border-radius:2px;background:#dcedfa;"></div>
<div class="t" style="left:1810.3px;top:659.9px;font-size:15px;font-weight:bold;font-style:normal;color:#1e1e1e;transform:scaleX(0.8834);">LTM 12/31 Revenue</div>
<svg style="left:0;top:0" width="1989" height="994" viewBox="0 0 1989 994"><path d="M436 727.8 H1950" stroke="#dedede" stroke-width="1.2" stroke-dasharray="6 5"/><path d="M436 758.2 H1950" stroke="#dedede" stroke-width="1.2" stroke-dasharray="6 5"/><path d="M436 789.5 H1950" stroke="#dedede" stroke-width="1.2" stroke-dasharray="6 5"/><path d="M436 821 H1950" stroke="#dedede" stroke-width="1.2" stroke-dasharray="6 5"/><path d="M436 852.4 H1950" stroke="#dedede" stroke-width="1.2" stroke-dasharray="6 5"/><path d="M730.6 872.4 V882" stroke="#d8d8d8" stroke-width="1.2" stroke-dasharray="6 5"/><path d="M916 745 V882" stroke="#d8d8d8" stroke-width="1.2" stroke-dasharray="6 5"/><path d="M1100.8 749.6 V882" stroke="#d8d8d8" stroke-width="1.2" stroke-dasharray="6 5"/><path d="M1286 756.5 V882" stroke="#d8d8d8" stroke-width="1.2" stroke-dasharray="6 5"/><path d="M1656 756 V882" stroke="#d8d8d8" stroke-width="1.2" stroke-dasharray="6 5"/><defs><linearGradient id="gn" x1="0" y1="0" x2="0" y2="1"><stop offset="0" stop-color="#243463"/><stop offset="1" stop-color="#1a2444"/></linearGradient><linearGradient id="gg" x1="0" y1="0" x2="0" y2="1"><stop offset="0" stop-color="#86d283"/><stop offset="1" stop-color="#6dc66a"/></linearGradient><linearGradient id="gr" x1="0" y1="0" x2="0" y2="1"><stop offset="0" stop-color="#ff0000"/><stop offset="1" stop-color="#d40000"/></linearGradient></defs><rect x="471.8" y="872.4" width="147.4" height="9.6" fill="url(#gn)"/><rect x="656.5" y="715" width="148.5" height="157.4" fill="url(#gg)"/><rect x="841.6" y="715" width="148.2" height="30.0" fill="url(#gr)"/><rect x="1027" y="745" width="148.0" height="4.6" fill="url(#gr)"/><rect x="1211.7" y="750" width="148.3" height="6.5" fill="url(#gr)"/><rect x="1396.8" y="757" width="148.0" height="125.0" fill="url(#gn)"/><rect x="1581.8" y="746" width="148.0" height="10.0" fill="url(#gg)"/><rect x="1766.8" y="746" width="148.1" height="136.0" fill="url(#gn)"/><path d="M619.2 872.4 H656.5" stroke="#8a8a8a" stroke-width="1.3" stroke-dasharray="2 2"/><path d="M805 715 H841.6" stroke="#8a8a8a" stroke-width="1.3" stroke-dasharray="2 2"/><path d="M989.8 745 H1027" stroke="#8a8a8a" stroke-width="1.3" stroke-dasharray="2 2"/><path d="M1175 749.6 H1211.7" stroke="#8a8a8a" stroke-width="1.3" stroke-dasharray="2 2"/><path d="M1360 756.5 H1396.8" stroke="#8a8a8a" stroke-width="1.3" stroke-dasharray="2 2"/><path d="M1544.8 757 H1581.8" stroke="#8a8a8a" stroke-width="1.3" stroke-dasharray="2 2"/><path d="M1729.8 746 H1766.8" stroke="#8a8a8a" stroke-width="1.3" stroke-dasharray="2 2"/><path d="M434.5 882.6 H1952" stroke="#5f5f5f" stroke-width="1.5"/><path d="M545.5 883 V892.5" stroke="#444" stroke-width="1.5"/><path d="M730.6 883 V892.5" stroke="#444" stroke-width="1.5"/><path d="M916 883 V892.5" stroke="#444" stroke-width="1.5"/><path d="M1100.8 883 V892.5" stroke="#444" stroke-width="1.5"/><path d="M1286 883 V892.5" stroke="#444" stroke-width="1.5"/><path d="M1470.8 883 V892.5" stroke="#444" stroke-width="1.5"/><path d="M1656 883 V892.5" stroke="#444" stroke-width="1.5"/><path d="M1841 883 V892.5" stroke="#444" stroke-width="1.5"/></svg>
<div class="t" style="left:524.9px;top:853.0px;font-size:15.5px;font-weight:bold;font-style:normal;color:#333;transform:scaleX(0.9397);">1.60%</div>
<div class="t" style="left:705.4px;top:695.6px;font-size:15.5px;font-weight:bold;font-style:normal;color:#333;transform:scaleX(0.9606);">25.39%</div>
<div class="t" style="left:889.7px;top:695.6px;font-size:15.5px;font-weight:bold;font-style:normal;color:#333;transform:scaleX(0.9692);">(4.77%)</div>
<div class="t" style="left:1074.8px;top:725.8px;font-size:15.5px;font-weight:bold;font-style:normal;color:#333;transform:scaleX(0.9599);">(0.77%)</div>
<div class="t" style="left:1262.7px;top:730.7px;font-size:15.5px;font-weight:bold;font-style:normal;color:#333;transform:scaleX(0.8604);">(1.13%)</div>
<div class="t" style="left:1445.1px;top:737.2px;font-size:15.5px;font-weight:bold;font-style:normal;color:#333;transform:scaleX(0.9777);">20.32%</div>
<div class="t" style="left:1636.7px;top:725.8px;font-size:15.5px;font-weight:bold;font-style:normal;color:#333;transform:scaleX(0.8783);">1.77%</div>
<div class="t" style="left:1815.0px;top:725.8px;font-size:15.5px;font-weight:bold;font-style:normal;color:#333;transform:scaleX(0.9911);">22.08%</div>
<div class="t" style="left:492.1px;top:904.0px;font-size:15.5px;font-weight:normal;font-style:normal;color:#333;transform:scaleX(0.9675);">Base Unlevered</div>
<div class="t" style="left:528.5px;top:919.0px;font-size:15.5px;font-weight:normal;font-style:normal;color:#333;transform:scaleX(1.0061);">Yield</div>
<div class="t" style="left:672.8px;top:904.0px;font-size:15.5px;font-weight:normal;font-style:normal;color:#333;transform:scaleX(0.9939);">Revenue Growth</div>
<div class="t" style="left:873.8px;top:904.0px;font-size:15.5px;font-weight:normal;font-style:normal;color:#333;transform:scaleX(1.0101);">Exit Multiple</div>
<div class="t" style="left:875.2px;top:919.0px;font-size:15.5px;font-weight:normal;font-style:normal;color:#333;transform:scaleX(1.0282);">Contraction</div>
<div class="t" style="left:1043.8px;top:904.0px;font-size:15.5px;font-weight:normal;font-style:normal;color:#333;transform:scaleX(0.9574);">Transaction Fees</div>
<div class="t" style="left:1240.8px;top:904.0px;font-size:15.5px;font-weight:normal;font-style:normal;color:#333;">Management</div>
<div class="t" style="left:1238.2px;top:919.0px;font-size:15.5px;font-weight:normal;font-style:normal;color:#333;transform:scaleX(0.9808);">Incentive Plan</div>
<div class="t" style="left:1422.4px;top:904.0px;font-size:15.5px;font-weight:normal;font-style:normal;color:#333;transform:scaleX(0.9523);">Unlevered IRR</div>
<div class="t" style="left:1619.0px;top:904.0px;font-size:15.5px;font-weight:normal;font-style:normal;color:#333;transform:scaleX(1.0106);">Entry Debt</div>
<div class="t" style="left:1830.0px;top:904.0px;font-size:15.5px;font-weight:normal;font-style:normal;color:#333;transform:scaleX(0.8204);">IRR</div>
</body></html>
